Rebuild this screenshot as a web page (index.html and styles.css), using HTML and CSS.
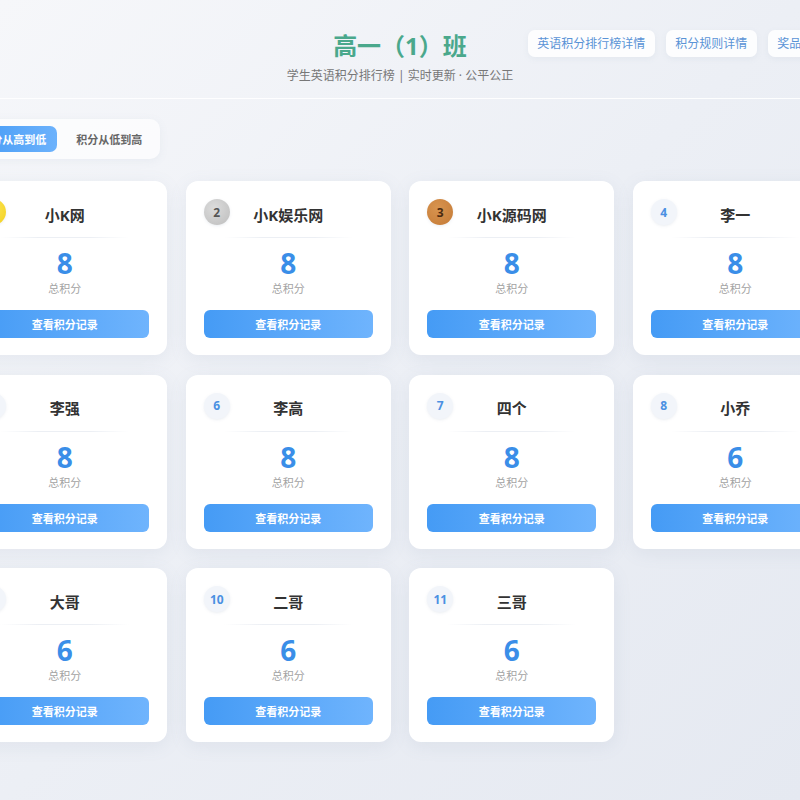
FILE: index.html
```html
<!DOCTYPE html>
<html lang="zh-CN">
<head>
    <meta charset="UTF-8">
    <meta name="viewport" content="width=device-width, initial-scale=1.0">
    <title>高一（1）班 - 英语积分排行榜</title>
    <link rel="stylesheet" href="styles.css">
</head>
<body>
    <div class="page">
        <header class="top">
            <div></div>
            <div class="title-box">
                <h1>高一（1）班</h1>
                <p class="sub">学生英语积分排行榜 | 实时更新 · 公平公正</p>
            </div>
            <nav class="links">
                <a href="#">英语积分排行榜详情</a>
                <a href="#">积分规则详情</a>
                <a href="#">奖品详情</a>
            </nav>
        </header>

        <div class="sort">
            <button class="on">积分从高到低</button>
            <button>积分从低到高</button>
        </div>

        <div class="grid">
            <div class="card">
                <div class="card-head"><span class="rank gold">1</span><span class="name">小K网</span><span></span></div>
                <div class="line"></div>
                <div class="score">8</div>
                <div class="label">总积分</div>
                <button class="btn">查看积分记录</button>
            </div>
            <div class="card">
                <div class="card-head"><span class="rank silver">2</span><span class="name">小K娱乐网</span><span></span></div>
                <div class="line"></div>
                <div class="score">8</div>
                <div class="label">总积分</div>
                <button class="btn">查看积分记录</button>
            </div>
            <div class="card">
                <div class="card-head"><span class="rank bronze">3</span><span class="name">小K源码网</span><span></span></div>
                <div class="line"></div>
                <div class="score">8</div>
                <div class="label">总积分</div>
                <button class="btn">查看积分记录</button>
            </div>
            <div class="card">
                <div class="card-head"><span class="rank">4</span><span class="name">李一</span><span></span></div>
                <div class="line"></div>
                <div class="score">8</div>
                <div class="label">总积分</div>
                <button class="btn">查看积分记录</button>
            </div>
            <div class="card">
                <div class="card-head"><span class="rank">5</span><span class="name">李强</span><span></span></div>
                <div class="line"></div>
                <div class="score">8</div>
                <div class="label">总积分</div>
                <button class="btn">查看积分记录</button>
            </div>
            <div class="card">
                <div class="card-head"><span class="rank">6</span><span class="name">李高</span><span></span></div>
                <div class="line"></div>
                <div class="score">8</div>
                <div class="label">总积分</div>
                <button class="btn">查看积分记录</button>
            </div>
            <div class="card">
                <div class="card-head"><span class="rank">7</span><span class="name">四个</span><span></span></div>
                <div class="line"></div>
                <div class="score">8</div>
                <div class="label">总积分</div>
                <button class="btn">查看积分记录</button>
            </div>
            <div class="card">
                <div class="card-head"><span class="rank">8</span><span class="name">小乔</span><span></span></div>
                <div class="line"></div>
                <div class="score">6</div>
                <div class="label">总积分</div>
                <button class="btn">查看积分记录</button>
            </div>
            <div class="card">
                <div class="card-head"><span class="rank">9</span><span class="name">大哥</span><span></span></div>
                <div class="line"></div>
                <div class="score">6</div>
                <div class="label">总积分</div>
                <button class="btn">查看积分记录</button>
            </div>
            <div class="card">
                <div class="card-head"><span class="rank">10</span><span class="name">二哥</span><span></span></div>
                <div class="line"></div>
                <div class="score">6</div>
                <div class="label">总积分</div>
                <button class="btn">查看积分记录</button>
            </div>
            <div class="card">
                <div class="card-head"><span class="rank">11</span><span class="name">三哥</span><span></span></div>
                <div class="line"></div>
                <div class="score">6</div>
                <div class="label">总积分</div>
                <button class="btn">查看积分记录</button>
            </div>
        </div>
    </div>
</body>
</html>
```

FILE: styles.css
```css
/* 排行榜页面样式 */
body {
    margin: 0;
    min-height: 800px;
    display: flex;
    justify-content: center;
    font-family: "Noto Sans", "Noto Sans CJK SC", sans-serif;
    color: #333;
    background: linear-gradient(135deg, #f6f7fa 0%, #eceff5 50%, #e5e9f1 100%);
    overflow: hidden;
}
.page {
    width: 875.5px;
    flex-shrink: 0;
    padding-top: 30px;
}
.top {
    display: grid;
    grid-template-columns: 1fr auto 1fr;
    align-items: start;
    padding-bottom: 13px;
    border-bottom: 1px solid rgba(255, 255, 255, 0.9);
}
.title-box {
    text-align: center;
}
h1 {
    margin: 0;
    font-size: 24px;
    line-height: 32px;
    font-weight: bold;
    color: #4aa88c;
}
.sub {
    margin: 5px 0 0;
    font-size: 12px;
    line-height: 18px;
    color: #777;
}
.links {
    justify-self: end;
    display: flex;
    gap: 11px;
    margin-right: 3px;
}
.links a {
    display: block;
    height: 27px;
    line-height: 27px;
    padding: 0 9.5px;
    font-size: 12px;
    color: #5a93d6;
    text-decoration: none;
    background: rgba(255, 255, 255, 0.85);
    border-radius: 7px;
    box-shadow: 0 2px 6px rgba(120, 140, 170, 0.08);
}
/* 排序切换 */
.sort {
    display: inline-flex;
    gap: 8px;
    margin-top: 20px;
    padding: 7px;
    background: rgba(255, 255, 255, 0.65);
    border-radius: 10px;
    box-shadow: 0 2px 10px rgba(120, 140, 170, 0.08);
}
.sort button {
    height: 26px;
    padding: 0 11px;
    border: none;
    border-radius: 7px;
    font-family: inherit;
    font-size: 11px;
    font-weight: bold;
    color: #666;
    background: transparent;
}
.sort button.on {
    color: #fff;
    background: linear-gradient(90deg, #449af5, #6cb2fc);
}
/* 卡片 */
.grid {
    margin-top: 22px;
    display: grid;
    grid-template-columns: repeat(4, 205px);
    column-gap: 18.5px;
    row-gap: 19.5px;
}
.card {
    background: #fff;
    border-radius: 12px;
    padding: 18px 18px 17px;
    box-shadow: 0 4px 18px rgba(110, 130, 160, 0.1);
}
.card-head {
    display: grid;
    grid-template-columns: 26px 1fr 26px;
    align-items: center;
    height: 26px;
}
.rank {
    width: 26px;
    height: 26px;
    border-radius: 50%;
    display: flex;
    align-items: center;
    justify-content: center;
    font-size: 12px;
    font-weight: bold;
    color: #4a90e2;
    background: #f2f5fa;
    box-shadow: 0 1px 3px rgba(120, 140, 170, 0.15);
}
.rank.gold {
    background: radial-gradient(circle at 40% 35%, #fde85a, #f2cf1e);
    color: #7a5a00;
}
.rank.silver {
    background: radial-gradient(circle at 40% 35%, #dcdcdc, #bdbdbd);
    color: #555;
}
.rank.bronze {
    background: radial-gradient(circle at 40% 35%, #d8944f, #c47a36);
    color: #4a2a10;
}
.name {
    padding-top: 4px;
    text-align: center;
    font-size: 15px;
    font-weight: bold;
    color: #333;
}
.line {
    height: 1px;
    margin: 12px 20px 0;
    background: linear-gradient(90deg, rgba(230, 234, 240, 0), #eceff4 30%, #eceff4 70%, rgba(230, 234, 240, 0));
}
.score {
    margin-top: 11px;
    text-align: center;
    font-size: 28px;
    line-height: 28px;
    font-weight: bold;
    color: #3a8ee8;
}
.label {
    margin-top: 4px;
    text-align: center;
    font-size: 11px;
    line-height: 16px;
    color: #a3a3a3;
}
.btn {
    display: block;
    width: 100%;
    height: 28px;
    margin-top: 13px;
    border: none;
    border-radius: 6px;
    font-family: inherit;
    font-size: 11px;
    font-weight: bold;
    color: #fff;
    background: linear-gradient(90deg, #459bf5, #6fb4fd);
    cursor: pointer;
}
```
